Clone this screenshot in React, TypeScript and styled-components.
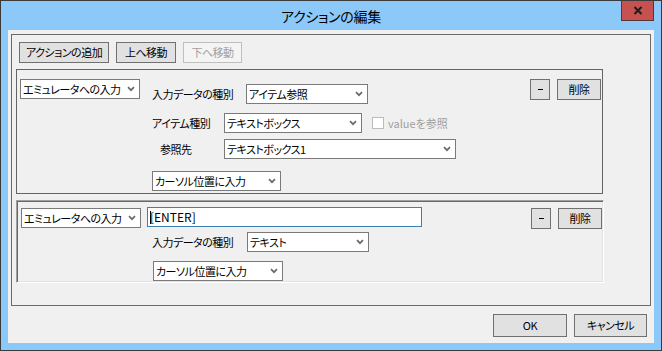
import React from 'react';
import styled, { createGlobalStyle } from 'styled-components';

const Global = createGlobalStyle`
  html, body { margin: 0; padding: 0; background: #ffffff; }
  body {
    font-family: "Noto Sans CJK JP", "Noto Sans", sans-serif;
    font-size: 11px;
    letter-spacing: -0.5px;
    color: #000;
    font-feature-settings: "palt";
  }
  * { box-sizing: border-box; }
`;

const Window = styled.div`
  width: 662px;
  height: 351px;
  border: 1px solid #3a3a3a;
  background: #8cc8f8;
  display: flex;
  flex-direction: column;
  padding: 0 7px 7px;
`;

const TitleBar = styled.div`
  height: 29px;
  flex: none;
  display: grid;
  grid-template-columns: 1fr auto 1fr;
  align-items: center;
`;

const Title = styled.div`
  grid-column: 2;
  font-size: 14px;
  letter-spacing: -0.3px;
  line-height: 1;
  color: #000;
  padding-top: 1px;
`;

const CloseBtn = styled.div`
  grid-column: 3;
  justify-self: end;
  align-self: start;
  width: 33px;
  height: 20px;
  background: #c75050;
  border: 1px solid #5c3434;
  border-top: none;
  display: flex;
  align-items: center;
  justify-content: center;
`;

const Client = styled.div`
  height: 313px;
  flex: none;
  background: #f0f0f0;
  display: flex;
  flex-direction: column;
  padding: 4px 3px 0;
`;

const GroupBox = styled.div`
  height: 272px;
  flex: none;
  border: 1px solid #6b6b6b;
  display: flex;
  flex-direction: column;
`;

const Toolbar = styled.div`
  display: flex;
  gap: 7px;
  padding: 7px 0 0 7px;
`;

const Btn = styled.button<{ $w: number; $h?: number }>`
  width: ${p => p.$w}px;
  height: ${p => p.$h ?? 21}px;
  flex: none;
  border: 1px solid #707070;
  background: #e1e1e1;
  color: #000;
  font: inherit;
  letter-spacing: inherit;
  line-height: 1;
  padding: 0;
  margin: 0;
  display: flex;
  align-items: center;
  justify-content: center;
  &:disabled {
    border-color: #bfbfbf;
    background: #f4f4f4;
    color: #a0a0a0;
  }
`;

const Dash = styled.span`
  display: block;
  width: 5px;
  height: 1px;
  background: #000;
`;

const PanelList = styled.div`
  display: flex;
  flex-direction: column;
  gap: 6px;
  margin-top: 6px;
  padding-left: 4px;
`;

const SinglePanel = styled.div`
  width: 587px;
  height: 125px;
  border: 1px solid #646464;
  display: flex;
  align-items: flex-start;
`;

const SunkenPanel = styled.div`
  width: 588px;
  height: 83px;
  border-style: solid;
  border-width: 1px;
  border-color: #a0a0a0 #ffffff #ffffff #a0a0a0;
  box-shadow: inset 1px 1px 0 #696969, inset -1px -1px 0 #e3e3e3;
  padding: 1px;
  display: flex;
  align-items: flex-start;
`;

const ComboBox = styled.div<{ $w: number; $ml?: number; $mt?: number }>`
  width: ${p => p.$w}px;
  height: 20px;
  flex: none;
  margin-left: ${p => p.$ml ?? 0}px;
  margin-top: ${p => p.$mt ?? 0}px;
  background: #fff;
  border: 1px solid #7a7a7a;
  display: flex;
  align-items: center;
  justify-content: space-between;
  padding: 0 4px 0 2px;
  white-space: nowrap;
  line-height: 1;
`;

const TextBox = styled.div`
  width: 275px;
  height: 20px;
  background: #fff;
  border: 1px solid #3c7fb1;
  display: flex;
  align-items: center;
  padding: 0 2px;
  line-height: 1;
  white-space: nowrap;
  font-size: 12px;
  letter-spacing: 0;
`;

const Caret = styled.span`
  display: inline-block;
  width: 1px;
  height: 13px;
  background: #000;
  margin-right: -1px;
`;

const Form = styled.div<{ $ml: number; $mt: number }>`
  display: flex;
  flex-direction: column;
  margin-left: ${p => p.$ml}px;
  margin-top: ${p => p.$mt}px;
`;

const FormRow = styled.div<{ $mt?: number }>`
  display: flex;
  align-items: center;
  margin-top: ${p => p.$mt ?? 0}px;
`;

const Label = styled.span<{ $w: number; $pl?: number }>`
  width: ${p => p.$w}px;
  flex: none;
  padding-left: ${p => p.$pl ?? 0}px;
  white-space: nowrap;
  line-height: 1;
`;

const CheckWrap = styled.label`
  display: flex;
  align-items: center;
  margin-left: 10px;
  color: #a0a0a0;
  line-height: 1;
  white-space: nowrap;
  letter-spacing: 0;
`;

const CheckBox = styled.span`
  width: 12px;
  height: 12px;
  border: 1px solid #bcbcbc;
  background: #fff;
  margin-right: 4px;
`;

const Spacer = styled.div`
  flex: 1;
`;

const RowButtons = styled.div<{ $mt: number; $mr: number }>`
  display: flex;
  gap: 7px;
  margin-top: ${p => p.$mt}px;
  margin-right: ${p => p.$mr}px;
`;

const Footer = styled.div`
  display: flex;
  justify-content: flex-end;
  gap: 7px;
  padding: 8px 4px 0 0;
`;

const Chevron = () => (
  <svg width="8" height="6" viewBox="0 0 8 6">
    <path d="M1 1.2 L4 4.2 L7 1.2" fill="none" stroke="#6a6a6a" strokeWidth="1.7" />
  </svg>
);

const Combo: React.FC<{ w: number; ml?: number; mt?: number; children: React.ReactNode }> = ({ w, ml, mt, children }) => (
  <ComboBox $w={w} $ml={ml} $mt={mt}>
    <span>{children}</span>
    <Chevron />
  </ComboBox>
);

export default function App() {
  return (
    <>
      <Global />
      <Window>
        <TitleBar>
          <Title>アクションの編集</Title>
          <CloseBtn>
            <svg width="10" height="9" viewBox="0 0 10 9">
              <path d="M1.5 1 L8.5 8 M8.5 1 L1.5 8" stroke="#1c1c1c" strokeWidth="2" />
            </svg>
          </CloseBtn>
        </TitleBar>
        <Client>
          <GroupBox>
            <Toolbar>
              <Btn $w={90}>アクションの追加</Btn>
              <Btn $w={60}>上へ移動</Btn>
              <Btn $w={59} disabled>下へ移動</Btn>
            </Toolbar>
            <PanelList>
              <SinglePanel>
                <Combo w={120} ml={3} mt={9}>エミュレータへの入力</Combo>
                <Form $ml={12} $mt={14}>
                  <FormRow>
                    <Label $w={94}>入力データの種別</Label>
                    <Combo w={122}>アイテム参照</Combo>
                  </FormRow>
                  <FormRow $mt={9}>
                    <Label $w={72}>アイテム種別</Label>
                    <Combo w={138}>テキストボックス</Combo>
                    <CheckWrap>
                      <CheckBox />
                      valueを参照
                    </CheckWrap>
                  </FormRow>
                  <FormRow $mt={6}>
                    <Label $w={72} $pl={8}>参照先</Label>
                    <Combo w={232}>テキストボックス1</Combo>
                  </FormRow>
                  <FormRow $mt={12}>
                    <Combo w={129}>カーソル位置に入力</Combo>
                  </FormRow>
                </Form>
                <Spacer />
                <RowButtons $mt={9} $mr={1}>
                  <Btn $w={20} aria-label="-"><Dash /></Btn>
                  <Btn $w={44}>削除</Btn>
                </RowButtons>
              </SinglePanel>
              <SunkenPanel>
                <Combo w={120} ml={3} mt={6}>エミュレータへの入力</Combo>
                <Form $ml={6} $mt={5}>
                  <TextBox>
                    <Caret />
                    [ENTER]
                  </TextBox>
                  <FormRow $mt={5}>
                    <Label $w={100} $pl={5}>入力データの種別</Label>
                    <Combo w={122}>テキスト</Combo>
                  </FormRow>
                  <FormRow $mt={9}>
                    <Combo w={130} ml={6}>カーソル位置に入力</Combo>
                  </FormRow>
                </Form>
                <Spacer />
                <RowButtons $mt={6} $mr={0}>
                  <Btn $w={20} aria-label="-"><Dash /></Btn>
                  <Btn $w={44}>削除</Btn>
                </RowButtons>
              </SunkenPanel>
            </PanelList>
          </GroupBox>
          <Footer>
            <Btn $w={74} $h={23}>OK</Btn>
            <Btn $w={73} $h={23}>キャンセル</Btn>
          </Footer>
        </Client>
      </Window>
    </>
  );
}
